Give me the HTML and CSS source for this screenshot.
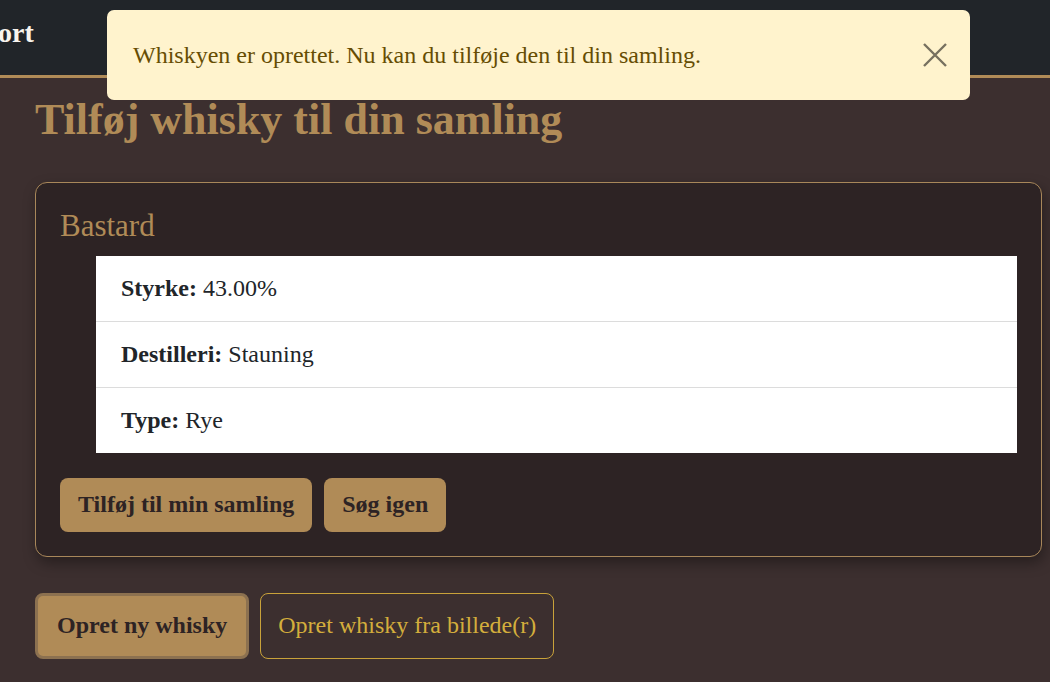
FILE: index.html
```html
<!DOCTYPE html>
<html lang="da">
<head>
    <meta charset="UTF-8">
    <meta name="viewport" content="width=device-width, initial-scale=1.0">
    <title>Tilføj whisky</title>
    <link rel="stylesheet" href="styles.css">
</head>
<body>
    <nav class="navbar">
        <span class="brand">ort</span>
    </nav>

    <div class="toast">
        <span>Whiskyen er oprettet. Nu kan du tilføje den til din samling.</span>
        <button class="toast-close" aria-label="Luk">
            <svg width="26" height="26" viewBox="0 0 26 26">
                <path d="M2 2 L24 24 M24 2 L2 24" stroke="currentColor" stroke-width="2.4" fill="none"/>
            </svg>
        </button>
    </div>

    <main class="page">
        <h1>Tilføj whisky til din samling</h1>

        <div class="card">
            <h5>Bastard</h5>
            <ul class="details">
                <li><strong>Styrke:</strong> 43.00%</li>
                <li><strong>Destilleri:</strong> Stauning</li>
                <li><strong>Type:</strong> Rye</li>
            </ul>
            <div class="actions">
                <button class="btn">Tilføj til min samling</button>
                <button class="btn">Søg igen</button>
            </div>
        </div>

        <div class="create">
            <button class="btn btn-active">Opret ny whisky</button>
            <button class="btn btn-outline">Opret whisky fra billede(r)</button>
        </div>
    </main>
</body>
</html>
```

FILE: styles.css
```css
body {
    background-color: #3c2f2f;
    font-family: 'Liberation Serif', 'Times New Roman', serif;
    font-size: 24px;
    color: #212529;
    margin: 0;
    padding: 0;
}

.navbar {
    background-color: #212529;
    border-bottom: 3px solid #b08b57;
    display: flex;
    align-items: center;
    padding-bottom: 10px;
    box-sizing: border-box;
    height: 78px;
}

.brand {
    color: #f8f4ee;
    font-weight: bold;
    font-size: 28px;
    margin-left: -2px;
}

.toast {
    position: absolute;
    top: 10px;
    left: 107px;
    width: 863px;
    height: 90px;
    box-sizing: border-box;
    padding: 0 22px 0 26px;
    background-color: #fff3cd;
    color: #664d03;
    border-radius: 7px;
    display: flex;
    align-items: center;
    justify-content: space-between;
    font-size: 24px;
}

.toast-close {
    background: none;
    border: none;
    padding: 0;
    color: #77705f;
    display: flex;
    cursor: pointer;
}

.page {
    padding: 0 8px 40px 35px;
}

h1 {
    color: #b08b57;
    font-size: 44px;
    margin: 16px 0 35px 0;
    line-height: 1.2;
}

.card {
    background-color: #2d2324;
    border: 1px solid #a8875a;
    border-radius: 12px;
    box-shadow: 2px 6px 14px rgba(0, 0, 0, 0.35);
    padding: 24px;
}

h5 {
    color: #b08b57;
    font-weight: normal;
    font-size: 31px;
    margin: 0 0 12px 0;
    line-height: 1.2;
}

.details {
    list-style: none;
    margin: 0 0 25px 36px;
    padding: 0;
    background-color: #fff;
}

.details li {
    padding: 0 25px;
    height: 65px;
    display: flex;
    align-items: center;
    gap: 6px;
    border-bottom: 1px solid #dcdcdc;
}

.details li:last-child {
    border-bottom: none;
}

.actions {
    display: flex;
    gap: 12px;
}

.btn {
    font-family: inherit;
    font-size: 24px;
    font-weight: bold;
    color: #2d2324;
    background-color: #b08b57;
    border: none;
    border-radius: 8px;
    height: 54px;
    padding: 0 18px;
    cursor: pointer;
}

.create {
    display: flex;
    gap: 11px;
    margin-top: 36px;
}

.create .btn {
    height: 66px;
    padding: 0 19px;
}

.btn-active {
    border: 3px solid #8c7150;
}

.create .btn-outline {
    background-color: transparent;
    border: 1px solid #c9a23a;
    color: #d4ae3c;
    font-weight: normal;
    padding: 0 17px;
}
```
